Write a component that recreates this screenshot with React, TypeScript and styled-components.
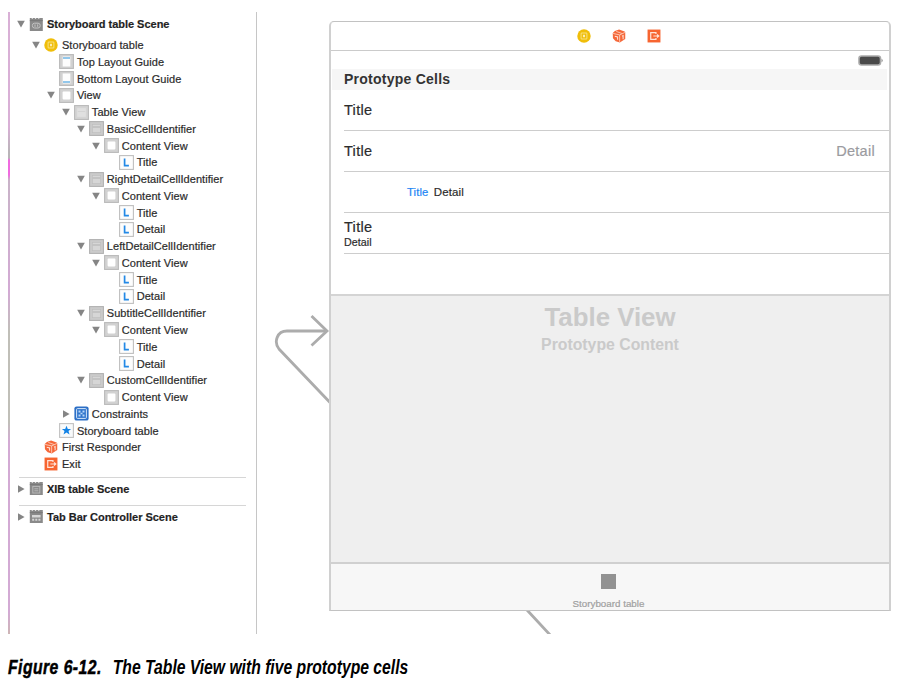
import React from "react";
import styled, { createGlobalStyle, css } from "styled-components";

const GlobalStyle = createGlobalStyle`
  *, *::before, *::after { box-sizing: border-box; }
  body {
    margin: 0;
    background: #fff;
    font-family: "Liberation Sans", Arial, sans-serif;
  }
`;

const Page = styled.main`
  width: 903px;
  height: 680px;
  padding: 12px 0 0 8px;
  overflow: hidden;
`;

const Figure = styled.section`
  display: grid;
  grid-template-columns: 2px 247px 1fr;
  height: 622px;
  overflow: hidden;
`;

const Edge = styled.div`
  background: linear-gradient(
    #d9b0d6 0 115px, #b9b4b8 140px 146px, #f06be0 148px 163px,
    #c9b3c8 168px, #d3aad4 280px, #c0bfb8 320px 410px, #d3aad4 430px 600px, #cdb5b5
  );
`;

const Outline = styled.nav`
  display: flex;
  flex-direction: column;
  border-right: 1px solid #c6c6c6;
  color: #2b2b2b;
  font-size: 11px;
  -webkit-text-stroke: 0.2px #2b2b2b;
`;

const Row = styled.div<{ $depth: number; $scene?: boolean }>`
  display: flex;
  align-items: center;
  flex: none;
  height: 16.78px;
  padding-left: ${(p) => 5 + p.$depth * 14.95}px;
  white-space: nowrap;
  letter-spacing: 0.06px;
  ${(p) =>
    p.$scene &&
    css`
      height: 22px;
      font-weight: 700;
      letter-spacing: -0.02px;
      color: #1e1e1e;
    `}
`;

const FirstScene = styled.div`
  padding: 1.3px 0;
`;

const ToggleSlot = styled.span`
  display: flex;
  width: 14px;
  flex: none;
  justify-content: center;
  padding-right: 1.6px;
`;

const IconSlot = styled.span`
  display: flex;
  width: 15px;
  flex: none;
  justify-content: center;
  margin-right: 3px;
`;

const Rule = styled.hr<{ $top: number }>`
  flex: none;
  width: 227px;
  height: 1px;
  margin: ${(p) => p.$top}px 0 0 9px;
  border: 0;
  background: #d6d6d6;
`;

const Canvas = styled.section`
  position: relative;
  padding: 9px 0 0 72px;
`;

const Segue = styled.svg`
  position: absolute;
  left: 0;
  top: 0;
`;

const Device = styled.article`
  position: relative;
  display: flex;
  flex-direction: column;
  width: 562px;
  height: 590px;
  border: 1px solid #c2c2c2;
  border-left: 2px solid #d0d0d0;
  border-right: 2px solid #d0d0d0;
  border-radius: 5px 5px 0 0;
  background: #fff;
  overflow: hidden;
`;

const Dock = styled.header`
  display: flex;
  align-items: center;
  justify-content: center;
  gap: 21px;
  flex: none;
  height: 29px;
  padding-right: 1px;
  padding-left: 18px;
  border-bottom: 1px solid #cbcbcb;
`;

const StatusBar = styled.div`
  display: flex;
  justify-content: flex-end;
  align-items: center;
  flex: none;
  height: 18px;
  padding-right: 6px;
`;

const SectionTitle = styled.h2`
  flex: none;
  margin: 0 2px 0 1px;
  height: 21px;
  padding-left: 12px;
  background: #f6f6f6;
  color: #333;
  font-size: 14px;
  line-height: 20px;
  font-weight: 700;
  letter-spacing: 0.24px;
`;

const Cell = styled.div<{ $height?: number; $indent?: number; $column?: boolean; $last?: boolean }>`
  display: flex;
  flex: none;
  flex-direction: ${(p) => (p.$column ? "column" : "row")};
  align-items: ${(p) => (p.$column ? "flex-start" : "center")};
  justify-content: ${(p) => (p.$column ? "center" : "flex-start")};
  height: ${(p) => p.$height ?? 41}px;
  margin-left: 13px;
  padding-top: ${(p) => (p.$column ? 2 : 0)}px;
  padding-left: ${(p) => p.$indent ?? 0}px;
  padding-right: 14px;
  border-bottom: 1px solid ${(p) => (p.$last ? "transparent" : "#cdcdcd")};
`;

const CellText = styled.span<{ $size?: number; $color?: string; $end?: boolean; $spacing?: number }>`
  color: ${(p) => p.$color ?? "#2c2c2c"};
  font-size: ${(p) => p.$size ?? 14.5}px;
  line-height: ${(p) => (p.$size ? "13px" : "17px")};
  letter-spacing: ${(p) => p.$spacing ?? 0.3}px;
  -webkit-text-stroke: 0.2px currentColor;
  ${(p) => p.$end && "margin-left: auto;"}
`;

const Placeholder = styled.div`
  display: flex;
  flex-direction: column;
  align-items: center;
  flex: 1;
  padding-top: 6px;
  border-top: 2px solid #d4d4d4;
  border-bottom: 2px solid #d0d0d0;
  background: #efefef;
  color: #cacaca;
  font-weight: 700;
`;

const PlaceholderTitle = styled.div`
  font-size: 25.8px;
  line-height: 31px;
`;

const PlaceholderNote = styled.div`
  font-size: 15.8px;
  line-height: 24px;
`;

const TabBar = styled.footer`
  display: flex;
  flex-direction: column;
  align-items: center;
  flex: none;
  height: 46px;
  padding: 10px 3px 0 0;
  background: #f7f7f7;
  color: #a0a0a0;
  font-size: 9.8px;
  line-height: 12px;
  -webkit-text-stroke: 0.2px #a0a0a0;
`;

const TabImage = styled.span`
  width: 15px;
  height: 16px;
  margin-bottom: 9px;
  background: #929292;
`;

const Caption = styled.p`
  margin: 21px 0 0;
  color: #000;
  font-size: 20px;
  line-height: 24px;
  font-style: italic;
  font-weight: 700;
  white-space: pre;
  transform: scaleX(0.785);
  transform-origin: 0 50%;
`;

const FigureNumber = styled.span`
  margin-right: 14px;
  letter-spacing: 0.6px;
  -webkit-text-stroke: 0.5px #000;
`;

type IconKind =
  | "scene" | "sceneTable" | "sceneTabs" | "controller" | "top" | "bottom" | "view"
  | "table" | "cell" | "label" | "constraints" | "star" | "responder" | "exit";

function Icon({ kind, size }: { kind: IconKind; size?: number }) {
  const small = ["controller", "responder", "exit"].includes(kind);
  const px = size ?? (small ? 14 : 15);
  const frame = (inner: React.ReactNode, fill = "#d2d2d2", edge = "#b9b9b9") => (
    <>
      <rect x="0.6" y="0.6" width="13.8" height="13.8" fill={fill} stroke={edge} strokeWidth="1.1" />
      {inner}
    </>
  );
  const clapper = (inner: React.ReactNode) => (
    <>
      <path d="M.8 1h1.6l.8.9.9-.9h1.6l.8.9.9-.9h1.6l.8.9.9-.9h3.1v13H.8z" fill="#8a8a8a" />
      <path d="M.8 3.6h13" stroke="#747474" strokeWidth=".8" />
      {inner}
    </>
  );
  const art: Record<IconKind, React.ReactNode> = {
    scene: clapper(
      <g fill="none" stroke="#c4c4c4" strokeWidth="1">
        <rect x="3.4" y="6.2" width="7.8" height="4.8" rx="2.2" />
        <path d="M6 7.4v2.4M8.7 7.4v2.4" />
      </g>
    ),
    sceneTable: clapper(
      <g fill="none" stroke="#b8b8b8" strokeWidth="1">
        <rect x="3.8" y="5.4" width="7" height="6.6" />
        <path d="M5.3 7.8h4M5.3 9.8h4" />
      </g>
    ),
    sceneTabs: clapper(
      <path d="M3 6h8.6v2.6H3zM3.2 9.7h2v2h-2zM6.3 9.7h2v2h-2zM9.4 9.7h2v2h-2z" fill="#d6d6d6" />
    ),
    controller: (
      <>
        <circle cx="7.5" cy="7.5" r="7.2" fill="#f0be0a" />
        <rect x="4.4" y="4.4" width="6.2" height="6.2" rx=".8" fill="none" stroke="#f7e07e" strokeWidth="1.1" />
        <rect x="6.4" y="6.2" width="2.2" height="2.6" fill="#fbedb2" />
      </>
    ),
    top: frame(
      <>
        <rect x="3.7" y="2.5" width="7.6" height="10" fill="#fdfdfd" />
        <path d="M4 4h7" stroke="#4aa3df" strokeWidth="1.2" />
      </>
    ),
    bottom: frame(
      <>
        <rect x="3.7" y="2.5" width="7.6" height="10" fill="#fdfdfd" />
        <path d="M4 11h7" stroke="#4aa3df" strokeWidth="1.2" />
      </>
    ),
    view: frame(<rect x="3.6" y="3.6" width="7.8" height="7.8" rx=".8" fill="#fff" />),
    table: frame(
      <>
        <rect x="3.2" y="3.2" width="8.6" height="8.6" fill="#e0e0e0" />
        <path d="M3.8 6.5h7.4" stroke="#d2d2d2" strokeWidth=".9" />
      </>,
      "#d4d4d4"
    ),
    cell: frame(
      <>
        <rect x="3.3" y="3.3" width="8.4" height="8.4" fill="#d6d6d6" stroke="#bdbdbd" strokeWidth=".7" />
        <path d="M3.8 6h7.4" stroke="#b0b0b0" strokeWidth="1" />
      </>,
      "#cbcbcb",
      "#b2b2b2"
    ),
    label: frame(<path d="M5.6 3.4v7.2h4.3" fill="none" stroke="#2389e6" strokeWidth="1.7" />, "#fdfdfd", "#bfbfbf"),
    constraints: (
      <>
        <rect x=".4" y=".4" width="14.2" height="14.2" rx="2.2" fill="#2c6fc6" />
        <rect x="2.6" y="2.6" width="9.8" height="9.8" rx=".8" fill="#2f74cc" stroke="#d5e6fa" strokeWidth="1" />
        <path d="M4.5 4.5h2v2h-2zM8.5 4.5h2v2h-2zM4.5 8.5h2v2h-2zM8.5 8.5h2v2h-2zM6.5 6.7h2v1.6h-2z" fill="#b8d6f8" />
      </>
    ),
    star: frame(
      <path d="M7.5 2.8l1.3 3.2h3.3L9.5 8l1 3.5-3-2.1-3 2.1 1-3.5-2.6-2h3.3z" fill="#1383e6" />,
      "#f8fafb",
      "#c2c2c2"
    ),
    responder: (
      <>
        <path d="M7.6.6l5.9 2 .7 1v7.2l-5.8 3.6-4.5-1.2L1 10 .8 4.2 3 2.2z" fill="#f5683a" />
        <path d="M1.2 4.8l7 1.5 5.6-2.6M8.2 6.3v7.5M4.6 2.6l6 2.2" fill="none" stroke="#fdd6c6" strokeWidth=".9" />
        <path d="M3 7.8l3 .7v3M10.7 7.6l1.2-.6v4" fill="none" stroke="#ffe3d8" strokeWidth="1.1" />
      </>
    ),
    exit: (
      <>
        <rect x=".6" y=".6" width="13.8" height="13.8" fill="#f76530" />
        <path d="M9.6 5.4V3.8H4v7.4h5.6V9.6M6.8 7.5h6M10.7 6l1.9 1.5-1.9 1.5" fill="none" stroke="#ffe2d6" strokeWidth="1.3" />
      </>
    ),
  };
  return (
    <svg width={px} height={px} viewBox="0 0 15 15" aria-hidden="true">
      {art[kind]}
    </svg>
  );
}

function Toggle({ open }: { open: boolean }) {
  return (
    <svg width="8" height="8" viewBox="0 0 8 8" aria-hidden="true">
      <path d={open ? "M.2 .8h7.6L4 7.6z" : "M1 .3v7.4L7.6 4z"} fill="#858585" />
    </svg>
  );
}

interface Node {
  depth: number;
  icon: IconKind;
  text: string;
  open?: boolean;
}

const label = (text: string): Node => ({ depth: 6, icon: "label", text });
const cell = (text: string): Node => ({ depth: 4, icon: "cell", text, open: true });
const content = (open?: boolean): Node => ({ depth: 5, icon: "view", text: "Content View", open });

const nodes: Node[] = [
  { depth: 1, icon: "controller", text: "Storyboard table", open: true },
  { depth: 2, icon: "top", text: "Top Layout Guide" },
  { depth: 2, icon: "bottom", text: "Bottom Layout Guide" },
  { depth: 2, icon: "view", text: "View", open: true },
  { depth: 3, icon: "table", text: "Table View", open: true },
  cell("BasicCellIdentifier"), content(true), label("Title"),
  cell("RightDetailCellIdentifier"), content(true), label("Title"), label("Detail"),
  cell("LeftDetailCellIdentifier"), content(true), label("Title"), label("Detail"),
  cell("SubtitleCellIdentifier"), content(true), label("Title"), label("Detail"),
  cell("CustomCellIdentifier"), content(),
  { depth: 3, icon: "constraints", text: "Constraints", open: false },
  { depth: 2, icon: "star", text: "Storyboard table" },
  { depth: 1, icon: "responder", text: "First Responder" },
  { depth: 1, icon: "exit", text: "Exit" },
];

function TreeRow({ node, scene }: { node: Node; scene?: boolean }) {
  return (
    <Row $depth={node.depth} $scene={scene}>
      <ToggleSlot>{node.open !== undefined && <Toggle open={node.open} />}</ToggleSlot>
      <IconSlot><Icon kind={node.icon} /></IconSlot>
      {node.text}
    </Row>
  );
}

export default function App() {
  return (
    <>
      <GlobalStyle />
      <Page>
        <Figure>
          <Edge />
          <Outline>
            <FirstScene>
              <TreeRow scene node={{ depth: 0, icon: "scene", text: "Storyboard table Scene", open: true }} />
            </FirstScene>
            {nodes.map((node, i) => <TreeRow key={i} node={node} />)}
            <Rule $top={4} />
            <TreeRow scene node={{ depth: 0, icon: "sceneTable", text: "XIB table Scene", open: false }} />
            <Rule $top={5} />
            <TreeRow scene node={{ depth: 0, icon: "sceneTabs", text: "Tab Bar Controller Scene", open: false }} />
          </Outline>
          <Canvas>
            <Segue width="646" height="622" viewBox="257 12 646 622" fill="none" stroke="#acacac" strokeWidth="2.8">
              <path d="M327 331H287C277 331 273.5 342 279 349L330 402.5 527 610 552 637" />
              <path d="M311.5 316L327 331 311.5 345.5" />
            </Segue>
            <Device>
              <Dock>
                <Icon kind="controller" size={14} />
                <Icon kind="responder" size={14} />
                <Icon kind="exit" size={14} />
              </Dock>
              <StatusBar>
                <svg width="25" height="11" viewBox="0 0 25 11" aria-label="Battery full">
                  <rect x="1" y="1" width="21.5" height="9" rx="2.5" fill="#4a4a4a" stroke="#ababab" strokeWidth="1.6" />
                  <path d="M23.5 3.8q1.3.4 1.3 1.7t-1.3 1.7z" fill="#999" />
                </svg>
              </StatusBar>
              <SectionTitle>Prototype Cells</SectionTitle>
              <Cell><CellText>Title</CellText></Cell>
              <Cell>
                <CellText>Title</CellText>
                <CellText $end $color="#9b9b9f">Detail</CellText>
              </Cell>
              <Cell $indent={63}>
                <CellText $size={11.3} $color="#2486f5" $spacing={0.1}>Title&nbsp;</CellText>
                <CellText $size={11.5} $spacing={0.12}>&#8202;&#8202;Detail</CellText>
              </Cell>
              <Cell $column>
                <CellText>Title</CellText>
                <CellText $size={10.7} $spacing={0.05}>Detail</CellText>
              </Cell>
              <Cell $last $height={40} />
              <Placeholder>
                <PlaceholderTitle>Table View</PlaceholderTitle>
                <PlaceholderNote>Prototype Content</PlaceholderNote>
              </Placeholder>
              <TabBar>
                <TabImage />
                Storyboard table
              </TabBar>
            </Device>
          </Canvas>
        </Figure>
        <Caption>
          <FigureNumber>Figure 6-12.</FigureNumber>
          The Table View with five prototype cells
        </Caption>
      </Page>
    </>
  );
}
